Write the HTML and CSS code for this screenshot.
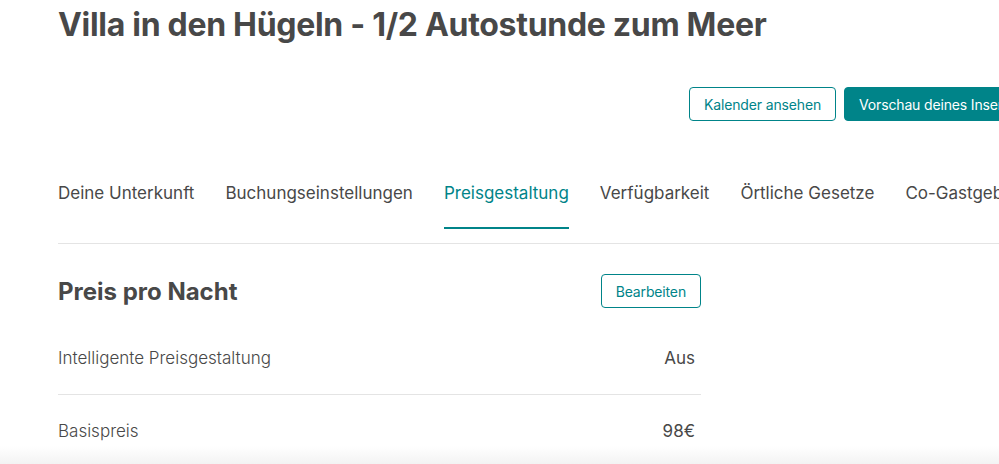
FILE: index.html
```html
<!DOCTYPE html>
<html lang="de">
<head>
<meta charset="utf-8">
<title>Preisgestaltung</title>
<link rel="stylesheet" href="styles.css">
</head>
<body>
<div class="page">
  <h1 class="title">Villa in den Hügeln - 1/2 Autostunde zum Meer</h1>
  <div class="actions">
    <button class="btn btn-outline">Kalender ansehen</button>
    <button class="btn btn-primary">Vorschau deines Inserats</button>
  </div>
  <nav class="tabs">
    <a class="tab">Deine Unterkunft</a>
    <a class="tab">Buchungseinstellungen</a>
    <a class="tab active">Preisgestaltung</a>
    <a class="tab">Verfügbarkeit</a>
    <a class="tab">Örtliche Gesetze</a>
    <a class="tab">Co-Gastgeber</a>
  </nav>
  <section class="section">
    <div class="section-head">
      <h2 class="section-title">Preis pro Nacht</h2>
      <button class="btn btn-outline">Bearbeiten</button>
    </div>
    <div class="rows">
      <div class="row">
        <span class="label">Intelligente Preisgestaltung</span>
        <span class="value">Aus</span>
      </div>
      <div class="row">
        <span class="label">Basispreis</span>
        <span class="value">98€</span>
      </div>
    </div>
  </section>
</div>
<div class="fade"></div>
</body>
</html>
```

FILE: styles.css
```css
html, body {
  margin: 0;
  padding: 0;
  overflow: hidden;
  background: #fff;
  height: 464px;
}
body {
  font-family: "Inter", "Roboto", "Liberation Sans", sans-serif;
  color: #484848;
  position: relative;
}
.page {
  width: 1100px;
  padding-left: 58px;
}
.title {
  margin: 0;
  padding-top: 4px;
  font-size: 32px;
  font-weight: 700;
  line-height: 42px;
  letter-spacing: -0.3px;
  color: #484848;
}
.actions {
  display: flex;
  gap: 8px;
  margin-top: 41px;
  padding-left: 631px;
}
.btn {
  font-family: inherit;
  font-size: 14px;
  letter-spacing: -0.15px;
  height: 34px;
  padding: 0 14px;
  border-radius: 4px;
  cursor: pointer;
  white-space: nowrap;
}
.btn-outline {
  background: #fff;
  border: 1px solid #008489;
  color: #008489;
}
.btn-primary {
  background: #008489;
  border: 1px solid #008489;
  color: #fff;
}
.tabs {
  display: flex;
  gap: 31px;
  margin-top: 54px;
  border-bottom: 1px solid #e4e4e4;
  white-space: nowrap;
}
.tab {
  font-size: 17px;
  color: #484848;
  padding: 8px 0 24px;
  border-bottom: 2px solid transparent;
  margin-bottom: 14px;
}
.tab.active {
  color: #008489;
  border-bottom-color: #008489;
}
.section {
  width: 643px;
}
.section-head {
  display: flex;
  justify-content: space-between;
  align-items: center;
  margin-top: 30px;
}
.section-title {
  margin: 0;
  font-size: 24px;
  font-weight: 700;
  color: #484848;
}
.rows {
  margin-top: 14px;
}
.row {
  display: flex;
  justify-content: space-between;
  align-items: center;
  height: 72px;
  padding: 0 6px 0 0;
  font-size: 17px;
}
.row + .row {
  border-top: 1px solid #e4e4e4;
}
.label {
  font-weight: 300;
}
.value {
  font-weight: 400;
}
.fade {
  position: absolute;
  left: 0;
  right: 0;
  bottom: 0;
  height: 18px;
  background: linear-gradient(to bottom, rgba(240,240,240,0), rgba(240,240,240,0.8));
}
```
